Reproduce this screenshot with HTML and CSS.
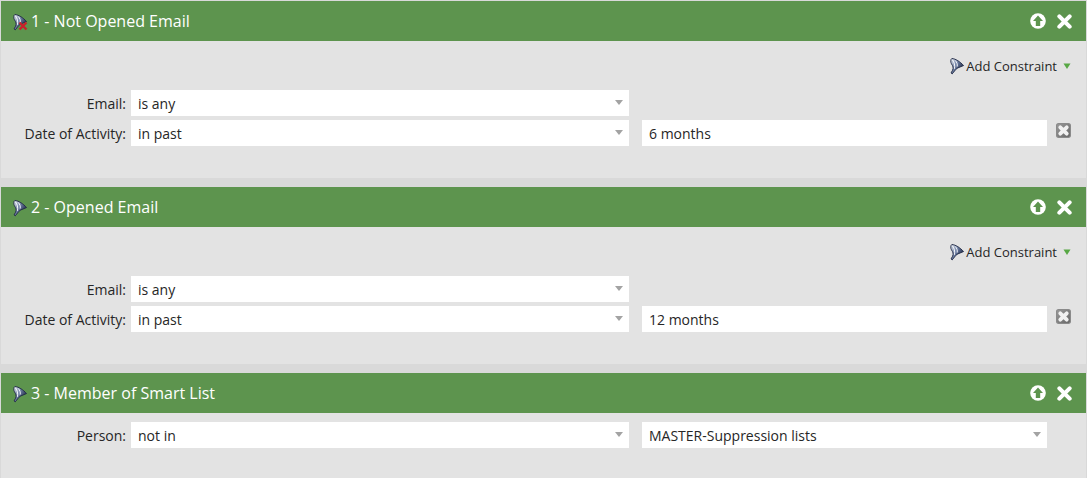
FILE: index.html
```html
<!DOCTYPE html>
<html lang="en">
<head>
<meta charset="utf-8">
<title>Smart List Filters</title>
<link rel="stylesheet" href="styles.css">
</head>
<body>
<svg class="defs" width="0" height="0" aria-hidden="true">
  <defs>
    <linearGradient id="fn" x1="0" y1="0" x2="1" y2=".6">
      <stop offset="0" stop-color="#e6ebf3"/>
      <stop offset=".5" stop-color="#6d7ea3"/>
      <stop offset="1" stop-color="#1d2744"/>
    </linearGradient>
    <symbol id="funnel" viewBox="0 0 16 18">
      <path d="M3 1 C7 1.2 12 4.5 15.5 8.5 L9.5 11 C7.8 11.8 6.5 13.5 5 15.5 L3.4 17.4 L2.2 16.4 L3.8 13.5 C5 11 4.2 9 2.6 6.6 C1.6 4.8 1.6 2 3 1Z" fill="url(#fn)" stroke="#222b45" stroke-width="1"/>
      <path d="M3.8 2.6 C5.6 5 6.6 8 5.8 12 M6.8 3.2 C8.4 5 9.2 7.2 8.7 9.6" fill="none" stroke="#ffffff" stroke-width="1"/>
    </symbol>
    <symbol id="up" viewBox="0 0 16 16">
      <circle cx="8" cy="8" r="7.8" fill="#fff"/>
      <path d="M8 2.6 L13 8 H10.2 V13 H5.8 V8 H3Z" fill="#5d944e"/>
    </symbol>
    <symbol id="close" viewBox="0 0 14 14">
      <path d="M2.2 2.2 L11.8 11.8 M11.8 2.2 L2.2 11.8" stroke="#fff" stroke-width="3.8" stroke-linecap="round" fill="none"/>
    </symbol>
    <linearGradient id="rm" x1="0" y1="0" x2="1" y2="1">
      <stop offset="0" stop-color="#9a9a9a"/>
      <stop offset="1" stop-color="#666666"/>
    </linearGradient>
    <symbol id="remove" viewBox="0 0 14 14">
      <rect x=".5" y=".5" width="13" height="13" rx="2" fill="url(#rm)" stroke="#8a8a8a"/>
      <path d="M4 4 L10 10 M10 4 L4 10" stroke="#f1f1f1" stroke-width="3.6" stroke-linecap="round" fill="none"/>
    </symbol>
  </defs>
</svg>

<section class="card">
  <header class="bar">
    <span class="bar-icon">
      <svg class="funnel"><use href="#funnel"/></svg>
      <svg class="negate" viewBox="0 0 10 10"><path d="M1.5 1.5 L8.5 8.5 M8.5 1.5 L1.5 8.5" stroke="#c8202a" stroke-width="2.4" fill="none"/></svg>
    </span>
    <h2 class="bar-title">1 - Not Opened Email</h2>
    <svg class="tool up"><use href="#up"/></svg>
    <svg class="tool close"><use href="#close"/></svg>
  </header>
  <div class="body">
    <div class="constraint">
      <svg class="funnel-lg"><use href="#funnel"/></svg>
      <span>Add Constraint</span>
      <svg class="caret-green" viewBox="0 0 8 8"><path d="M.5 1.5 H7.5 L4 7Z" fill="#58a845"/></svg>
    </div>
    <div class="row">
      <label class="label">Email:</label>
      <div class="field select">is any<i class="arrow"></i></div>
    </div>
    <div class="row">
      <label class="label">Date of Activity:</label>
      <div class="field select">in past<i class="arrow"></i></div>
      <div class="field value">6 months</div>
      <svg class="remove"><use href="#remove"/></svg>
    </div>
  </div>
</section>

<section class="card">
  <header class="bar">
    <span class="bar-icon"><svg class="funnel"><use href="#funnel"/></svg></span>
    <h2 class="bar-title">2 - Opened Email</h2>
    <svg class="tool up"><use href="#up"/></svg>
    <svg class="tool close"><use href="#close"/></svg>
  </header>
  <div class="body">
    <div class="constraint">
      <svg class="funnel-lg"><use href="#funnel"/></svg>
      <span>Add Constraint</span>
      <svg class="caret-green" viewBox="0 0 8 8"><path d="M.5 1.5 H7.5 L4 7Z" fill="#58a845"/></svg>
    </div>
    <div class="row">
      <label class="label">Email:</label>
      <div class="field select">is any<i class="arrow"></i></div>
    </div>
    <div class="row">
      <label class="label">Date of Activity:</label>
      <div class="field select">in past<i class="arrow"></i></div>
      <div class="field value">12 months</div>
      <svg class="remove"><use href="#remove"/></svg>
    </div>
  </div>
</section>

<section class="card last">
  <header class="bar">
    <span class="bar-icon"><svg class="funnel"><use href="#funnel"/></svg></span>
    <h2 class="bar-title">3 - Member of Smart List</h2>
    <svg class="tool up"><use href="#up"/></svg>
    <svg class="tool close"><use href="#close"/></svg>
  </header>
  <div class="body short">
    <div class="row">
      <label class="label">Person:</label>
      <div class="field select">not in<i class="arrow"></i></div>
      <div class="field value select">MASTER-Suppression lists<i class="arrow"></i></div>
    </div>
  </div>
</section>
</body>
</html>
```

FILE: styles.css
```css
* { box-sizing: border-box; }
html, body { margin: 0; padding: 0; height: 100%; overflow: hidden; }
body {
  background: #d9d9d9;
  font-family: "Open Sans", "Liberation Sans", sans-serif;
  font-size: 14px;
  color: #262626;
  padding-top: 1px;
}
.defs { position: absolute; }
.card { margin: 0 1px 9px 1px; background: #e3e3e3; }
.card.last { margin-bottom: 0; height: 105px; }
.bar {
  height: 40px;
  background: #5d944e;
  display: flex;
  align-items: center;
  color: #fff;
}
.bar-icon { position: relative; width: 30px; height: 40px; flex: none; }
.funnel { position: absolute; left: 11px; top: 12px; width: 15px; height: 18px; }
.negate { position: absolute; left: 17px; top: 20px; width: 10px; height: 10px; }
.bar-title {
  margin: 0;
  flex: 1;
  font-size: 16px;
  font-weight: 400;
  line-height: 40px;
}
.tool { flex: none; }
.up { width: 16px; height: 16px; margin-right: 11px; margin-left: 0; }
.close { width: 15px; height: 15px; margin-right: 14px; }
.body { height: 137px; padding-top: 15px; }
.body.short { height: auto; padding-top: 9px; }
.constraint {
  height: 20px;
  display: flex;
  align-items: center;
  justify-content: flex-end;
  padding-right: 15px;
  margin-bottom: 14px;
  font-size: 13px;
}
.funnel-lg { width: 15px; height: 18px; margin-right: 2px; }
.caret-green { width: 8px; height: 8px; margin-left: 6px; }
.row { display: flex; align-items: center; height: 26px; margin-bottom: 4px; }
.label { width: 125px; text-align: right; margin-right: 5px; flex: none; }
.field {
  position: relative;
  height: 26px;
  background: #fff;
  padding-left: 7px;
  line-height: 28px;
  flex: none;
}
.field.select { width: 498px; }
.field.value { width: 405px; margin-left: 13px; }
.arrow {
  position: absolute;
  right: 6px;
  top: 10px;
  width: 0;
  height: 0;
  border-left: 4px solid transparent;
  border-right: 4px solid transparent;
  border-top: 5px solid #a3a3a3;
}
.remove { width: 15px; height: 15px; margin-left: 9px; margin-top: -6px; flex: none; }
```
